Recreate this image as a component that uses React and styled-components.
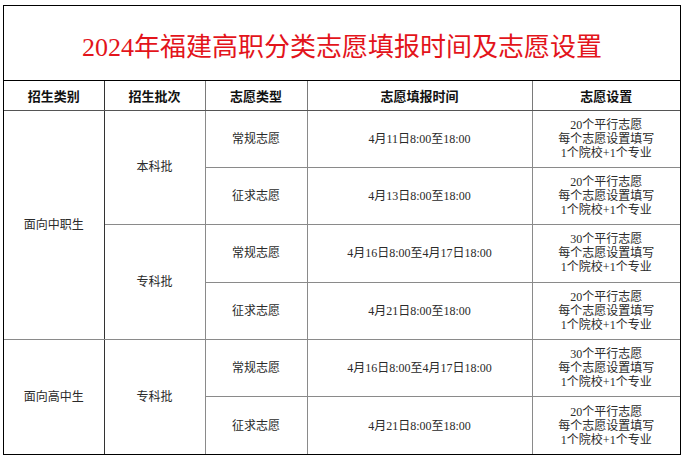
import React from "react";
import styled, { createGlobalStyle } from "styled-components";

const Global = createGlobalStyle`
  html, body { margin: 0; padding: 0; background: #fff; }
  body { font-family: "Liberation Serif", "Noto Sans CJK SC", serif; }
`;

const Page = styled.div`
  padding: 5px 3px 0 3px;
`;

const Frame = styled.div`
  width: 676px;
  border: 1px solid #000;
`;

const Title = styled.div`
  height: 75px;
  border-bottom: 1px solid #000;
  display: flex;
  align-items: center;
  justify-content: center;
  padding-top: 3px;
  box-sizing: border-box;
  color: #e3141b;
  font-family: "Liberation Serif", "Noto Sans CJK SC", serif;
  font-size: 26px;
  font-weight: 400;
`;

const Table = styled.table`
  width: 100%;
  border-collapse: collapse;
  border-style: hidden;
  table-layout: fixed;
`;

const HeadRow = styled.tr`
  height: 29px;
`;

const BodyRow = styled.tr`
  height: 57.4px;
`;

const HeadCell = styled.th`
  border: 1px solid ${(p) => (p.$dark ? "#333" : "#7a7a7a")};
  border-bottom-color: #555;
  padding: 0;
  font-family: "Noto Sans CJK SC", sans-serif;
  font-size: 13px;
  font-weight: 700;
  color: #111;
  text-align: center;
  vertical-align: middle;
`;

const Cell = styled.td`
  border: 1px solid #8a8a8a;
  border-right-color: ${(p) => (p.$dark ? "#333" : "#8a8a8a")};
  padding: 0;
  font-family: "Liberation Serif", "Noto Sans CJK SC", serif;
  font-size: 12px;
  line-height: 14px;
  color: #2a2a2a;
  text-align: center;
  vertical-align: middle;
`;

const Lines = styled.div`
  display: flex;
  flex-direction: column;
  align-items: center;
`;

const cols = [100, 101, 102, 225, null];

const setting = (n) => (
  <Lines>
    <span>{n}个平行志愿</span>
    <span>每个志愿设置填写</span>
    <span>1个院校+1个专业</span>
  </Lines>
);

export default function App() {
  return (
    <Page>
      <Global />
      <Frame>
        <Title>2024年福建高职分类志愿填报时间及志愿设置</Title>
        <Table>
          <colgroup>
            {cols.map((w, i) => (
              <col key={i} style={w ? { width: w } : undefined} />
            ))}
          </colgroup>
          <thead>
            <HeadRow>
              <HeadCell $dark>招生类别</HeadCell>
              <HeadCell>招生批次</HeadCell>
              <HeadCell>志愿类型</HeadCell>
              <HeadCell>志愿填报时间</HeadCell>
              <HeadCell>志愿设置</HeadCell>
            </HeadRow>
          </thead>
          <tbody>
            <BodyRow>
              <Cell rowSpan={4} $dark>面向中职生</Cell>
              <Cell rowSpan={2}>本科批</Cell>
              <Cell>常规志愿</Cell>
              <Cell>4月11日8:00至18:00</Cell>
              <Cell>{setting(20)}</Cell>
            </BodyRow>
            <BodyRow>
              <Cell>征求志愿</Cell>
              <Cell>4月13日8:00至18:00</Cell>
              <Cell>{setting(20)}</Cell>
            </BodyRow>
            <BodyRow>
              <Cell rowSpan={2}>专科批</Cell>
              <Cell>常规志愿</Cell>
              <Cell>4月16日8:00至4月17日18:00</Cell>
              <Cell>{setting(30)}</Cell>
            </BodyRow>
            <BodyRow>
              <Cell>征求志愿</Cell>
              <Cell>4月21日8:00至18:00</Cell>
              <Cell>{setting(20)}</Cell>
            </BodyRow>
            <BodyRow>
              <Cell rowSpan={2} $dark>面向高中生</Cell>
              <Cell rowSpan={2}>专科批</Cell>
              <Cell>常规志愿</Cell>
              <Cell>4月16日8:00至4月17日18:00</Cell>
              <Cell>{setting(30)}</Cell>
            </BodyRow>
            <BodyRow>
              <Cell>征求志愿</Cell>
              <Cell>4月21日8:00至18:00</Cell>
              <Cell>{setting(20)}</Cell>
            </BodyRow>
          </tbody>
        </Table>
      </Frame>
    </Page>
  );
}
